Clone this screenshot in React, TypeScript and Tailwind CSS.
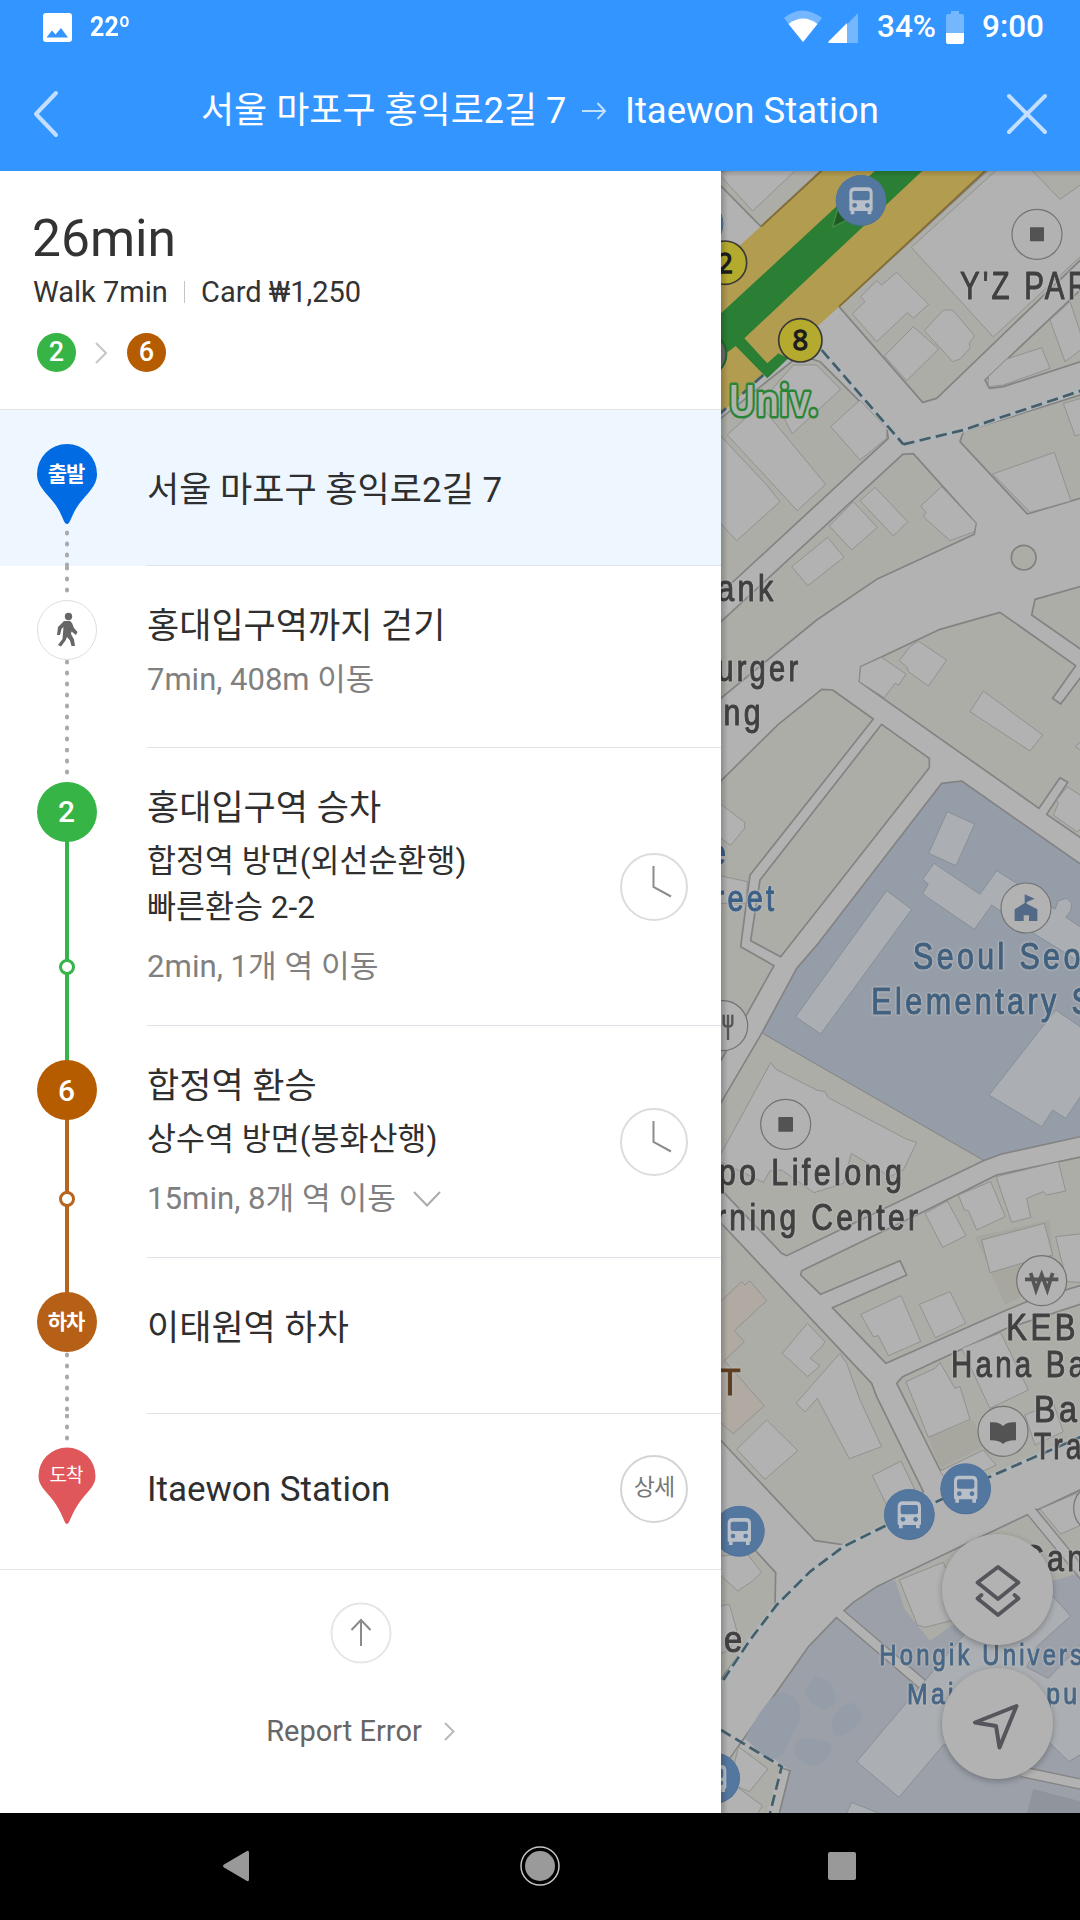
import React from "react";

const ROAD = "#b2b2b2";
const LINE = "#838383";

function Poly({ list, fill, stroke = LINE, w = 5 }: { list: string[]; fill: string; stroke?: string; w?: number }) {
  return (
    <g fill={fill} stroke={stroke} strokeWidth={w} strokeLinejoin="round">
      {list.map((p, i) => (
        <polygon key={i} points={p} />
      ))}
    </g>
  );
}

const Blocks = ({ list }: { list: string[] }) => <Poly list={list} fill="#acada6" />;
const Houses = ({ list }: { list: string[] }) => <Poly list={list} fill={ROAD} stroke="#8b8b8b" w={2.5} />;

function Bus({ x, y }: { x: number; y: number }) {
  return (
    <g transform={`translate(${x} ${y})`}>
      <circle cy={2} r={76} fill="#4d6f94" />
      <circle r={75} fill="#54779f" />
      <path d="M-35 30V-22Q-35-38-19-38H19Q35-38 35-22V30Q35 33 31 33V43H20V33H-20V43H-31V33Q-35 33-35 30Z" fill="#b8bfc8" />
      <rect x={-26} y={-27} width={52} height={28} rx={6} fill="#54779f" />
      <circle cx={-19} cy={16} r={7} fill="#54779f" />
      <circle cx={19} cy={16} r={7} fill="#54779f" />
    </g>
  );
}

function Poi({ x, y, children }: { x: number; y: number; children?: React.ReactNode }) {
  return (
    <g transform={`translate(${x} ${y})`}>
      <circle r={75} fill={ROAD} stroke="#727272" strokeWidth={3.5} />
      {children}
    </g>
  );
}

function Label({ x, y, len, t, fill = "#404040", size = 108 }: { x: number; y: number; len: number; t: string; fill?: string; size?: number }) {
  return (
    <text
      x={x}
      y={y}
      textLength={len}
      lengthAdjust="spacingAndGlyphs"
      fontSize={size}
      fill={fill}
      stroke={fill}
      strokeWidth={3}
      strokeLinejoin="round"
      style={{
        letterSpacing: 12,
        fontFamily: '"Liberation Sans", sans-serif',
        filter: "drop-shadow(0 0 3px #b8b8b8) drop-shadow(0 0 3px #b8b8b8)",
      }}
    >
      {t}
    </text>
  );
}

function MapView() {
  const blue = "#40607f";
  return (
    <svg viewBox="33 18 1077 4926" className="block h-[1642px] w-[359px]">
      <rect x={33} y={18} width={1077} height={4926} fill={ROAD} />

      <Blocks
        list={[
          "20,10 20,50 153,185 340,10",
          "850,0 387,425 638,712 680,700 1125,272 1125,0",
          "1125,362 825,645 838,670 880,665 1125,586",
          "760,800 750,830 952,1047 1125,996 1125,686",
          "20,770 270,570 330,590 530,790 535,820 75,1245 20,1295",
          "578,868 610,866 798,1075 793,1108 500,1243 320,1365 20,1610 20,1382",
        ]}
      />
      <Houses
        list={[
          "20,20 128,138 268,5",
          "604,247 850,516 1125,262 1125,50 1050,103 960,10 865,10",
          "427,447 465,410 452,395 500,347 515,360 560,322 656,418 610,459 592,443 500,530",
          "643,497 700,435 728,435 794,513 778,533 780,550 750,582 728,590",
          "523,573 610,485 686,552 590,647",
          "835,635 890,582 995,548 1020,610 880,660 835,665",
          "1020,465 1080,410 1110,500 1125,545 1065,590",
          "848,927 1033,862 1083,1008 960,1042",
          "1060,715 1125,697 1125,806 1095,812",
          "52,810 150,720 347,958 262,1037",
          "20,800 170,960 210,1010 80,1127 20,1063",
          "362,785 450,705 530,790 530,820 450,885",
          "180,680 250,600 320,600 392,673 247,806",
          "450,1007 495,967 593,1070 550,1113",
          "358,1083 430,1010 502,1087 425,1155",
          "632,1023 695,965 798,1075 793,1100 720,1127 640,1055 648,1042",
          "245,1205 353,1117 402,1177 293,1262",
        ]}
      />
      <circle cx={941} cy={1178} r={37} fill="#acada6" stroke="#808080" strokeWidth={5} />

      <polygon points="343,10 20,305 20,757 387,425 833,10" fill="#b29c50" />
      <path d="M343 10L153 185M387 425L833 10" stroke="#866b32" strokeWidth={5} fill="none" />
      <polygon points="503,10 20,457 20,587 77,543 172,640 235,580 205,565 172,595 103,520 645,10" fill="#2a7f34" />
      <polygon points="368,186 382,135 420,160" fill="#1f5a22" stroke="#438b48" strokeWidth={4} />

      <g fill="none" stroke="#afb4b6" strokeWidth={15}>
        <path d="M335 555L580 838L760 795L1110 677" />
      </g>
      <g fill="none" stroke="#435e6b" strokeWidth={8} strokeDasharray="34 16">
        <path d="M335 555L580 838" />
        <path d="M580 838L760 795L1125 673" />
        <path d="M160 630L20 755" />
      </g>

      <g transform="translate(0 1215)">
        <Blocks
          list={[
            "1125,46 975,88 965,135 1125,247",
            "452,290 448,335 987,715 1050,623 1073,637 1010,733 1125,812 1125,305 1052,402 1028,385 1097,287 870,127 690,178",
            "20,645 205,463 335,358 368,360 490,447 120,915 92,1130 192,1187 20,1495",
            "515,463 658,565 658,593 212,1160 122,1112 150,930",
          ]}
        />
        <Houses
          list={[
            "568,272 600,230 625,213 710,270 655,348 595,305 590,290",
            "452,290 515,262 588,312 567,345 555,340 523,383 448,335",
            "820,363 998,495 960,543 780,425",
            "1030,735 1045,700 1040,690 1072,650 1125,685 1125,770 1100,785",
            "1095,530 1125,505 1125,548",
            "20,693 104,757 104,775 62,826 20,795",
            "20,915 112,935 108,1000 20,1000",
          ]}
        />
        <Poly fill="#959da8" list={["695,640 755,633 1125,892 1125,1697 875,1752 820,1772 155,1390 260,1195 325,1120"]} />
        <Poly
          fill="#abafb3"
          stroke="#848a90"
          w={2.5}
          list={[
            "712,725 794,762 738,887 656,850",
            "672,880 810,973 860,902 920,940 1035,1018 1045,992 1070,985 1085,1000 1083,1020 1068,1042 1125,1080 1125,1185 970,1090 845,1005 793,1078 638,972 655,942 638,928",
            "530,962 605,1018 332,1392 257,1340",
            "1037,1320 1125,1380 1125,1560 1067,1645 1028,1620 995,1670 837,1575",
          ]}
        />
      </g>

      <g transform="translate(0 2445)">
        <polygon points="155,160 820,542 230,827 215,820 20,615 20,390" fill="#acada6" />
        <path d="M155 160L20 390M820 542L230 827L215 820L20 615" stroke={LINE} strokeWidth={5} fill="none" />
        <Houses list={["182,248 198,268 320,330 345,335 355,353 590,478 620,487 580,570 540,590 424,520 400,610 312,638 215,570 180,572 160,607 20,540 20,545"]} />
        <Blocks
          list={[
            "275,872 272,885 332,943 570,842 590,885 367,983 528,1150 890,990 950,965 1125,912 1125,528 860,585 640,695",
            "560,1210 578,1190 890,1045 1125,968 1125,1360 845,1490 690,1470",
            "20,715 485,1210 500,1250 640,1535 530,1640 405,1695 315,1682 20,1368",
          ]}
        />
        <polygon points="795,770 1020,720 1035,900 885,975" fill="#a8a79f" />
        <polygon points="655,1372 790,1320 820,1400 690,1465" fill="#a8a79f" />
        <Houses
          list={[
            "645,700 712,663 768,767 698,802",
            "745,645 842,605 886,710 800,750 775,692 763,690",
            "858,590 1045,545 1067,633 1010,645 1000,635 950,655 962,712 905,727",
            "815,780 1003,730 1028,825 935,850 840,878",
            "1037,770 1125,760 1125,908 1070,905",
            "452,1003 573,947 632,1085 535,1127 505,1067 490,1070",
            "628,973 720,935 767,1030 676,1073",
            "588,1205 675,1165 690,1148 735,1225 750,1220 780,1318 655,1372",
            "755,1105 872,1058 955,1230 840,1285",
            "690,1473 820,1410 858,1455 720,1520",
            "945,1305 1030,1270 1060,1355 975,1395",
            "217,1120 292,1030 345,1085 335,1100 300,1135 330,1157 293,1190",
            "390,1120 410,1150 450,1260 515,1400 418,1436 322,1255 285,1296 258,1270",
            "80,1408 170,1320 263,1412 165,1498",
            "487,1487 573,1443 620,1540 530,1575",
          ]}
        />
        <Poly fill="#b0aaa3" stroke="#8b8b8b" w={2.5} list={["20,975 95,905 105,915 120,903 170,962 73,1052 103,1085 43,1142 163,1277 70,1361 20,1318"]} />
      </g>

      <g transform="translate(0 3675)">
        <Blocks list={["20,365 135,480 197,548 195,650 120,750 20,885"]} />
        <Houses list={["20,500 110,490 155,547 125,575 83,603 20,545", "20,650 58,643 80,720 60,780 20,795"]} />
        <polygon points="555,570 500,590 430,637 380,682 295,770 100,1045 240,1140 205,1290 1125,1290 1125,500" fill="#9ba0a9" />
        <polygon points="555,570 950,375 1125,293 1125,545 1000,580 720,710 660,752 585,660" fill="#acada6" />
        <path d="M1125 293L950 375L500 590L430 637L380 682L295 770L60 1105" fill="none" stroke={LINE} strokeWidth={5} />
        <polygon points="60,1110 85,1070 210,1130 165,1290 20,1290 20,1150" fill="#acada6" />
        <path d="M215 1133L240 1142L203 1290" fill="none" stroke={LINE} strokeWidth={5} />
        <Houses list={["85,1070 174,1137 118,1205 60,1180", "20,1240 80,1190 157,1247 130,1290 20,1290", "568,570 700,517 770,680 645,712 622,705", "990,357 1100,310 1125,400 1052,432"]} />
        <g fill="#959da8">
          <path d="M105 1045Q180 900 225 908Q280 930 268 990L225 1080Q200 1115 170 1108Z" />
          <path d="M315 857Q365 870 378 915Q375 960 335 960Q285 930 287 905Z" />
          <path d="M365 1000Q380 945 425 938Q465 965 455 992Q400 1050 370 1032Z" />
          <path d="M253 1075Q260 1040 305 1045Q360 1050 365 1075Q350 1130 305 1127Q255 1115 253 1075Z" />
        </g>
        <path d="M390 672L640 885M965 365L1125 560M935 1145L1125 1185" stroke={LINE} strokeWidth={34} fill="none" />
        <path d="M380 663L640 885M960 359L1125 560M935 1145L1125 1185" stroke={ROAD} strokeWidth={26} fill="none" />
        <polygon points="970,1197 1125,1238 1125,1290 945,1290" fill="#90949d" />
        <Poly
          fill="#abafb3"
          stroke="#848a90"
          w={2.5}
          list={["440,1115 765,730 870,700 1030,620 1082,678 980,770 950,832 1015,865 1125,750 1125,1085 1077,1115 1000,1040 700,1065 567,1222", "425,1237 520,1275 510,1290 400,1290"]}
        />
        <g fill="none" stroke="#afb4b6" strokeWidth={15}>
          <path d="M35 885L120 750L200 645L300 545L400 470L525 408L680 335L840 260L1125 135" />
        </g>
        <g fill="none" stroke="#435e6b" strokeWidth={8} strokeDasharray="34 16">
          <path d="M40 870L120 750L200 645L300 545L400 470L525 408L680 335L840 260L1125 135" />
          <path d="M33 1020L215 1130L175 1290" />
        </g>
      </g>

      <Bus x={-36} y={175} />
      <Bus x={453} y={105} />
      <circle cx={-15} cy={568} r={64} fill="#6d6d6d" stroke="#1f6628" strokeWidth={6} />
      {[
        { x: 45, y: 293, n: "2" },
        { x: 271, y: 526, n: "8" },
      ].map((c) => (
        <g key={c.n}>
          <circle cx={c.x} cy={c.y} r={65} fill="#b4aa2d" stroke="#383838" strokeWidth={5} />
          <text x={c.x} y={c.y + 30} textAnchor="middle" fontSize={82} fill="#1c1c1c" stroke="#1c1c1c" strokeWidth={4} style={{ fontFamily: '"Open Sans", sans-serif' }}>
            {c.n}
          </text>
        </g>
      ))}
      <text x={55} y={752} textLength={270} lengthAdjust="spacingAndGlyphs" fontSize={128} fill="#b0b4ae" stroke="#2a8536" strokeWidth={15} strokeLinejoin="round" style={{ paintOrder: "stroke", fontFamily: '"Noto Sans", sans-serif', fontWeight: 600 }}>
        Univ.
      </text>
      <Poi x={981} y={208}>
        <rect x={-21} y={-21} width={42} height={42} rx={2} fill="#535353" />
      </Poi>
      <Poi x={948} y={2229}>
        <path d="M-34 39V4L-4 -15V-41L26 -28L2 -18V-13L34 4V39H9V22H-7V39Z" fill="#526a88" />
      </Poi>
      <Poi x={38} y={2582}>
        <path d="M3 -33V-8Q3 3 16 3Q29 3 29 -8V-33M16 -33V43" fill="none" stroke="#555" strokeWidth={7} />
      </Poi>
      <Poi x={227} y={2878}>
        <rect x={-22} y={-22} width={44} height={44} rx={2} fill="#535353" />
      </Poi>
      <Poi x={995} y={3347}>
        <path d="M-33 -23L-17 28L0 -18L17 28L33 -23M-50 -4H50" fill="none" stroke="#555" strokeWidth={11} />
      </Poi>
      <Poi x={879} y={3799}>
        <path d="M-39 -27Q-12 -30 0 -16Q12 -30 39 -27V27Q12 26 0 38Q-12 26 -39 27Z" fill="#535353" />
      </Poi>
      <Poi x={1166} y={4030} />

      <Label x={750} y={401} len={465} t="Y'Z PARK" size={114} />
      <Label x={-50} y={1307} len={250} t="Bank" />
      <Label x={-46} y={1549} len={320} t="Burger" />
      <Label x={-60} y={1681} len={222} t="King" />
      <Label x={-10} y={2100} len={70} t="e" fill="#3b6088" />
      <Label x={-88} y={2238} len={290} t="Street" fill="#3b6088" />
      <Label x={609} y={2411} len={512} t="Seoul Seo" fill={blue} />
      <Label x={484} y={2547} len={672} t="Elementary S" fill={blue} />
      <Label x={26} y={3059} len={560} t="po Lifelong" />
      <Label x={18} y={3195} len={616} t="rning Center" />
      <Label x={889} y={3526} len={218} t="KEB" />
      <Label x={723} y={3636} len={412} t="Hana Ba" />
      <Label x={28} y={3691} len={76} t="T" fill="#5d3d1f" />
      <Label x={972} y={3772} len={140} t="Ba" />
      <Label x={972} y={3882} len={152} t="Tra" />
      <Label x={935} y={4217} len={198} t="Can" />
      <Label x={-18} y={4462} len={126} t="se" />
      <Label x={508} y={4499} len={618} t="Hongik Univers" fill="#486786" size={90} />
      <Label x={591} y={4618} len={520} t="Main Campu" fill="#486786" size={90} />

      <Bus x={88} y={4097} />
      <Bus x={598} y={4047} />
      <Bus x={767} y={3970} />
      <Bus x={14} y={4838} />
    </svg>
  );
}

function RoundMapButton({ children }: { children: React.ReactNode }) {
  return <div className="flex size-[111px] items-center justify-center rounded-full bg-[#b2b2b2] shadow-[0_2px_6px_rgba(0,0,0,0.28)]">{children}</div>;
}

const X = 67;

function Dots({ ys }: { ys: number[] }) {
  return (
    <g fill="#a9a9a9">
      {ys.map((y) => (
        <rect key={y} x={X - 2} y={y - 2.5} width={4} height={5} rx={2} />
      ))}
    </g>
  );
}

function Rail({ h, children }: { h: number; children: React.ReactNode }) {
  return (
    <svg width={147} height={h} viewBox={`0 0 147 ${h}`} className="block shrink-0">
      {children}
    </svg>
  );
}

function Tag({ y, size, t, weight = 500 }: { y: number; size: number; t: string; weight?: number }) {
  return (
    <text x={X - 1} y={y} textAnchor="middle" fontSize={size} fontWeight={weight} fill="#fff" letterSpacing={-1}>
      {t}
    </text>
  );
}

function Row({ rail, action, children, className = "", pad, last }: { rail: React.ReactNode; action?: React.ReactNode; children: React.ReactNode; className?: string; pad: string; last?: boolean }) {
  return (
    <div className={`flex ${last ? "border-b border-[#e3e3e3]" : ""} ${className}`}>
      {rail}
      <div className={`flex flex-1 ${last ? "" : "border-b border-[#d6dbe4]/80"}`}>
        <div className={`flex-1 ${pad}`}>{children}</div>
        {action && <div className="flex w-[101px] items-center">{action}</div>}
      </div>
    </div>
  );
}

const Title = ({ children }: { children: React.ReactNode }) => <div className="text-[35px] leading-[48px] whitespace-nowrap text-[#2f2f2f]">{children}</div>;
const Line = ({ children }: { children: React.ReactNode }) => <div className="text-[31.500px] leading-[46px] whitespace-nowrap text-[#2f2f2f]">{children}</div>;

function Clock() {
  return (
    <svg width="68" height="68" viewBox="0 0 68 68" className="mt-px block" fill="none">
      <circle cx="34" cy="34" r="33" stroke="#dcdcdc" strokeWidth="2" />
      <path d="M33.500 13V34L51 43.500" stroke="#8c8c8c" strokeWidth="2" />
    </svg>
  );
}

export default function App() {
  return (
    <div className="flex h-[1920px] w-[1080px] flex-col overflow-hidden bg-white font-[Roboto,'Noto_Sans_CJK_KR',sans-serif]">
      <header className="flex h-[171px] shrink-0 flex-col bg-[#3395ff] text-white">
        <div className="flex h-[54px] items-center pl-[43px] text-[31.500px] leading-[54px] font-medium">
          <svg width="29" height="29" viewBox="0 0 29 29">
            <path fillRule="evenodd" d="M3 0H26Q29 0 29 3V26Q29 29 26 29H3Q0 29 0 26V3Q0 0 3 0ZM3.500 24.500H25L18 15L12.500 21.500L9 17.500Z" fill="#fff" />
          </svg>
          <span className="ml-[18px] w-[40px] origin-left scale-x-[0.88] text-[28.500px] font-bold">22º</span>
          <svg width="76" height="34" viewBox="0 0 76 34" className="ml-[653px] shrink-0">
            <path d="M1 8Q19-7 39 8L20 32Z" fill="#fff" opacity=".32" />
            <path d="M5.500 14Q20 3 34.500 14L20 32Z" fill="#fff" />
            <path d="M75 3V33H46Z" fill="#fff" opacity=".32" />
            <path d="M64 13V33H47Q44 33 46 31Z" fill="#fff" />
          </svg>
          <span className="ml-[18px] w-[69px] shrink-0">34%</span>
          <svg width="18" height="33" viewBox="0 0 18 33" className="shrink-0">
            <path d="M5 0H13V3H16Q18 3 18 5V22H0V5Q0 3 2 3H5Z" fill="#fff" opacity=".32" />
            <path d="M0 22H18V31Q18 33 16 33H2Q0 33 0 31Z" fill="#fff" />
          </svg>
          <span className="ml-[18px]">9:00</span>
        </div>
        <div className="flex h-[117px] items-center pl-[32px]">
          <svg width="28" height="48" viewBox="0 0 28 48" className="mt-[3px] shrink-0" fill="none">
            <path d="M24 3L4 24L24 45" stroke="#fff" strokeOpacity=".7" strokeWidth="4" strokeLinecap="round" strokeLinejoin="round" />
          </svg>
          <div className="-mt-[3px] ml-[141px] flex w-[806px] items-center text-[36px] leading-[48px] whitespace-nowrap">
            <span className="w-[381px]">서울 마포구 홍익로2길 7</span>
            <svg width="25" height="18" viewBox="0 0 25 18" fill="none" className="shrink-0">
              <path d="M0 9H23M15.500 1L23 9L15.500 17" stroke="#fff" strokeOpacity=".7" strokeWidth="2" />
            </svg>
            <span className="ml-[18px] text-[36.500px]">Itaewon Station</span>
          </div>
          <svg width="40" height="42" viewBox="0 0 40 42" className="mt-[3px] shrink-0" fill="none">
            <path d="M2 3L38 39M38 3L2 39" stroke="#fff" strokeOpacity=".7" strokeWidth="4" strokeLinecap="round" />
          </svg>
        </div>
      </header>

      <main className="flex h-[1642px] shrink-0">
        <section className="flex w-[721px] shrink-0 flex-col bg-white">
          <div className="h-[239px] border-b border-[#e3e3e3] pt-[38px] pl-[32px] text-[#333]">
            <div className="text-[51.500px] leading-[60px]">26min</div>
            <div className="mt-[3px] ml-px flex items-center text-[29px] leading-[40px] whitespace-nowrap">
              <span className="w-[151px]">Walk 7min</span>
              <span className="mr-[16px] h-[22px] w-px bg-[#c4c4c4]" />
              <span>Card ₩1,250</span>
            </div>
            <div className="mt-[21px] ml-[5px] flex items-center text-[27px] font-medium text-white">
              <span className="flex size-[39px] items-center justify-center rounded-full bg-[#36b445]">2</span>
              <svg width="12" height="22" viewBox="0 0 12 22" className="mr-[20px] ml-[19px]" fill="none">
                <path d="M1 1L11 11L1 21" stroke="#c6c6c6" strokeWidth="2" />
              </svg>
              <span className="flex size-[39px] items-center justify-center rounded-full bg-[#b65c00]">6</span>
            </div>
          </div>

          <Row
            className="h-[156px] bg-[#eef7ff]"
            pad="pt-[57px]"
            rail={
              <Rail h={156}>
                <path d="M67 114C63 114 63 102 50 88C42 79 37 73 37 64A30 30 0 0 1 97 64C97 73 92 79 84 88C71 102 71 114 67 114Z" fill="#006be2" />
                <Tag y={71} size={21} t="출발" weight={700} />
                <Dots ys={[123, 134, 145, 155]} />
              </Rail>
            }
          >
            <Title>서울 마포구 홍익로2길 7</Title>
          </Row>

          <Row
            className="h-[182px]"
            pad="pt-[37px]"
            rail={
              <Rail h={182}>
                <Dots ys={[2, 13, 24, 96, 107, 118, 129, 140, 151, 162, 173]} />
                <circle cx={X} cy={64} r={29.500} fill="#fff" stroke="#dedede" />
                <circle cx={68.500} cy={50.500} r={3.700} fill="#666" />
                <path d="M64 55H70L72 57L74 62L77.500 66L76 69L71.500 65.500L71 68L74 73.500L75 80H71.500L70 74.500L67 71L65.500 74.500L61 80.500L58 79L62.500 73L63.500 61L61.500 63L60 69H57L58 61Z" fill="#666" />
              </Rail>
            }
          >
            <Title>홍대입구역까지 걷기</Title>
            <div className="mt-[6px] text-[31px] leading-[46px] text-[#808080]">7min, 408m 이동</div>
          </Row>

          <Row
            className="h-[278px]"
            pad="pt-[37px]"
            action={<Clock />}
            rail={
              <Rail h={278}>
                <Dots ys={[2, 13, 24]} />
                <rect x={65} y={90} width={4} height={188} fill="#36b44a" />
                <circle cx={X} cy={64} r={30} fill="#36b445" />
                <Tag y={74} size={30} t="2" />
                <circle cx={X} cy={219} r={6.500} fill="#fff" stroke="#36b44a" strokeWidth={3} />
              </Rail>
            }
          >
            <Title>홍대입구역 승차</Title>
            <div className="mt-[6px]">
              <Line>합정역 방면(외선순환행)</Line>
              <Line>빠른환승 2-2</Line>
            </div>
            <div className="mt-[13px] text-[31.200px] leading-[46px] text-[#808080]">2min, 1개 역 이동</div>
          </Row>

          <Row
            className="h-[232px]"
            pad="pt-[37px]"
            action={<Clock />}
            rail={
              <Rail h={232}>
                <rect x={65} y={0} width={4} height={50} fill="#36b44a" />
                <rect x={65} y={90} width={4} height={142} fill="#b5651d" />
                <circle cx={X} cy={64} r={30} fill="#b65c00" />
                <Tag y={75} size={30} t="6" />
                <circle cx={X} cy={173} r={6.500} fill="#fff" stroke="#b5651d" strokeWidth={3} />
              </Rail>
            }
          >
            <Title>합정역 환승</Title>
            <div className="mt-[6px]">
              <Line>상수역 방면(봉화산행)</Line>
            </div>
            <div className="mt-[13px] flex items-center text-[31.200px] leading-[46px] whitespace-nowrap text-[#808080]">
              15min, 8개 역 이동
              <svg width="28" height="16" viewBox="0 0 28 16" className="ml-[17px]" fill="none">
                <path d="M1 1L14 14.500L27 1" stroke="#ababab" strokeWidth="2" />
              </svg>
            </div>
          </Row>

          <Row
            className="h-[156px]"
            pad="pt-[47px]"
            rail={
              <Rail h={156}>
                <rect x={65} y={0} width={4} height={50} fill="#b5651d" />
                <circle cx={X} cy={64} r={30} fill="#b55f17" />
                <Tag y={71} size={21} t="하차" weight={700} />
                <Dots ys={[97, 108, 119, 130, 141, 151]} />
              </Rail>
            }
          >
            <Title>이태원역 하차</Title>
          </Row>

          <Row
            className="h-[156px]"
            pad="pt-[52px]"
            last
            action={<div className="-mt-[6px] flex size-[68px] items-center justify-center rounded-full border-2 border-[#d4d4d4] text-[23px] tracking-[-1px] text-[#777]">상세</div>}
            rail={
              <Rail h={155}>
                <Dots ys={[2, 13, 24]} />
                <path d="M67 110C64 110 63 99 52 85C44 75 38.500 71 38.500 62A28.500 28.500 0 0 1 95.500 62C95.500 71 90 75 82 85C71 99 70 110 67 110Z" fill="#e0575b" />
                <Tag y={68} size={19} t="도착" weight={400} />
              </Rail>
            }
          >
            <Title>Itaewon Station</Title>
          </Row>

          <div className="flex flex-1 flex-col items-center pt-[32px]">
            <svg width="62" height="62" viewBox="0 0 62 62" className="block" fill="none">
              <circle cx="31" cy="31" r="29.500" stroke="#e6e6e6" strokeWidth="2" />
              <path d="M31 44V18M21.500 28L31 18L40.500 28" stroke="#8a8a8a" strokeWidth="2" />
            </svg>
            <div className="mt-[47px] flex items-center text-[29px] leading-[40px] text-[#666]">
              Report Error
              <svg width="11" height="19" viewBox="0 0 11 19" className="ml-[22px]" fill="none">
                <path d="M1 1L9.500 9.500L1 18" stroke="#b9b9b9" strokeWidth="2" />
              </svg>
            </div>
          </div>
        </section>

        <section className="relative w-[359px] shrink-0 overflow-hidden">
          <MapView />
          <div className="absolute inset-y-0 left-0 w-[7px] bg-gradient-to-r from-black/20 to-transparent" />
          <div className="absolute inset-x-0 top-0 h-[6px] bg-gradient-to-b from-black/15 to-transparent" />
          <div className="absolute right-[27px] bottom-[34px] flex flex-col gap-[23px]">
            <RoundMapButton>
              <svg width="46" height="54" viewBox="0 0 46 54" className="mt-[2px]" fill="none" stroke="#55555b" strokeWidth="3.800" strokeLinejoin="round" strokeLinecap="round">
                <path d="M23 3L43.500 18.500L23 35L2.500 18.500ZM6.500 31L2.500 34.500L23 51L43.500 34.500L39.500 31" />
              </svg>
            </RoundMapButton>
            <RoundMapButton>
              <svg width="48" height="48" viewBox="0 0 48 48" className="mt-[7px] mr-[3px]" fill="none" stroke="#55555b" strokeWidth="4" strokeLinejoin="round">
                <path d="M44.500 3L3 19.500L24 23L27.500 44.500Z" />
              </svg>
            </RoundMapButton>
          </div>
        </section>
      </main>

      <nav className="flex h-[107px] shrink-0 items-center bg-black pb-px pl-[223px]">
        <svg width="26" height="32" viewBox="0 0 26 32">
          <path d="M24 1Q26 0 26 3V29Q26 32 24 31L1 17.500Q-1 16 1 14.500Z" fill="#999" />
        </svg>
        <svg width="42" height="42" viewBox="0 0 42 42" className="ml-[270px]">
          <circle cx="21" cy="21" r="19" fill="none" stroke="#c4c4c4" strokeWidth="1.500" />
          <circle cx="21" cy="21" r="15" fill="#9a9a9a" />
        </svg>
        <div className="ml-[267px] size-[28px] rounded-[2px] bg-[#999]" />
      </nav>
    </div>
  );
}
